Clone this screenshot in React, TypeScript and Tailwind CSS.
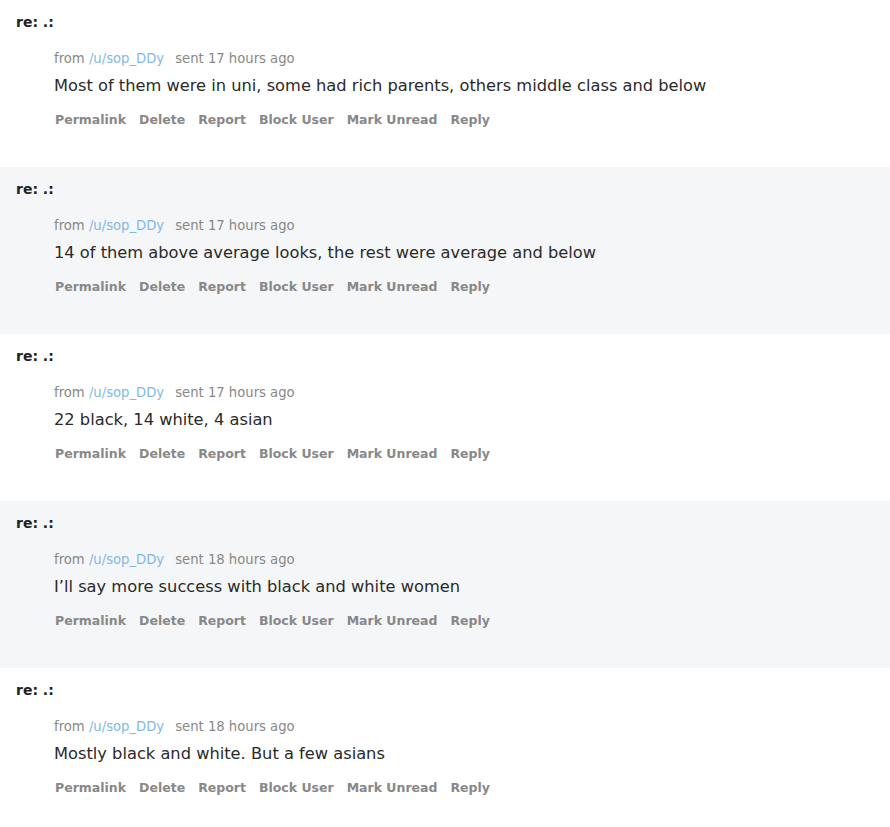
const messages = [
  { time: '17 hours ago', body: 'Most of them were in uni, some had rich parents, others middle class and below' },
  { time: '17 hours ago', body: '14 of them above average looks, the rest were average and below' },
  { time: '17 hours ago', body: '22 black, 14 white, 4 asian' },
  { time: '18 hours ago', body: 'I\u2019ll say more success with black and white women' },
  { time: '18 hours ago', body: 'Mostly black and white. But a few asians' },
];

const actions = ['Permalink', 'Delete', 'Report', 'Block User', 'Mark Unread', 'Reply'];

function Message({ time, body, shaded }: { time: string; body: string; shaded: boolean }) {
  return (
    <div className={`h-[167px] pt-[13px] ${shaded ? 'bg-[#f5f6f7]' : 'bg-white'}`}>
      <div className="pl-[16px] text-[14px] leading-[18px] font-bold text-[#222]">re: .:</div>
      <div className="pl-[54px] pt-[19px]">
        <div className="text-[13.2px] leading-[18px] text-[#888]">
          from <a className="text-[#84b8e4]">/u/sop_DDy</a>
          <span className="ml-[11px]">sent {time}</span>
        </div>
        <div className="mt-[7px] text-[16.25px] leading-[22px] text-[#2a2a2a]">{body}</div>
        <div className="mt-[14px] flex gap-[13px] pl-[1px] text-[12.5px] leading-[18px] font-bold text-[#888]">
          {actions.map((a) => (
            <a key={a}>{a}</a>
          ))}
        </div>
      </div>
    </div>
  );
}

export default function App() {
  return (
    <div className="min-h-[827px] bg-white" style={{ fontFamily: 'Verdana, "DejaVu Sans", sans-serif' }}>
      {messages.map((m, i) => (
        <Message key={i} time={m.time} body={m.body} shaded={i % 2 === 1} />
      ))}
    </div>
  );
}
